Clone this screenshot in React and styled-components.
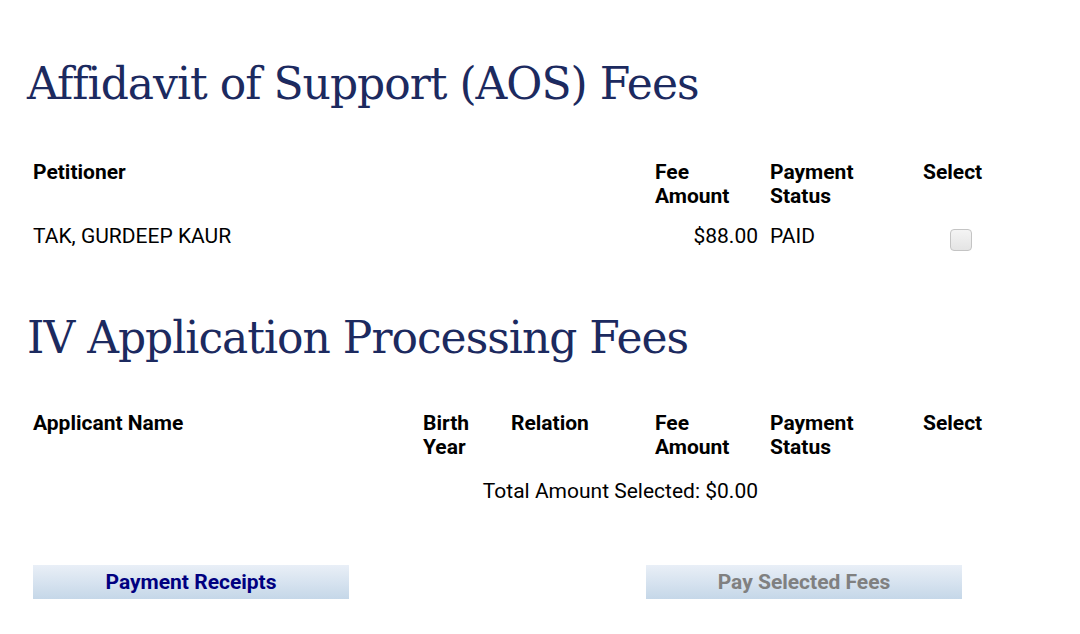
import styled, { createGlobalStyle } from "styled-components";

const Global = createGlobalStyle`
  body {
    margin: 0;
    background: #fff;
    font-family: Roboto, "Liberation Sans", sans-serif;
    color: #000;
  }
`;

const Page = styled.div`
  padding: 52px 0 0 27px;
  width: 980px;
`;

const Heading = styled.h1`
  margin: 0 0 ${(p) => p.$after}px 0;
  font-family: "DejaVu Serif", "Liberation Serif", serif;
  font-weight: normal;
  font-size: 44px;
  letter-spacing: -1px;
  line-height: 64px;
  color: #1c2a5f;
`;

const Grid = styled.div`
  display: grid;
  grid-template-columns: ${(p) => p.$cols};
  font-size: 21px;
  line-height: 24px;
`;

const Head = styled.div`
  padding: 0 6px;
  font-weight: bold;
  text-align: ${(p) => p.$align || "left"};
`;

const Cell = styled.div`
  padding: 16px 6px 0 6px;
  text-align: ${(p) => p.$align || "left"};
`;

const Check = styled.span`
  display: inline-block;
  width: 20px;
  height: 20px;
  margin-top: 5px;
  border: 1px solid #c4c4c4;
  border-radius: 4px;
  background: linear-gradient(#f4f4f4, #e4e4e4);
`;

const Total = styled.div`
  grid-column: 1 / ${(p) => p.$span};
  padding: 20px 6px 0 6px;
  text-align: right;
`;

const Section = styled.section`
  margin-bottom: ${(p) => p.$gap}px;
`;

const Buttons = styled.div`
  display: flex;
  justify-content: space-between;
  width: 929px;
  margin-left: 6px;
`;

const Button = styled.button`
  width: 316px;
  height: 34px;
  border: none;
  background: linear-gradient(#e9eff7, #c5d7e8);
  font-family: Roboto, "Liberation Sans", sans-serif;
  font-size: 21px;
  font-weight: bold;
  color: ${(p) => (p.disabled ? "#808080" : "#000080")};
  padding: 0;
`;

const cols1 = "622px 115px 153px 88px";
const cols2 = "390px 88px 144px 115px 153px 88px";

export default function App() {
  return (
    <Page>
      <Global />
      <Section $gap={50}>
        <Heading $after={44}>Affidavit of Support (AOS) Fees</Heading>
        <Grid $cols={cols1}>
          <Head>Petitioner</Head>
          <Head>Fee<br />Amount</Head>
          <Head>Payment<br />Status</Head>
          <Head>Select</Head>
          <Cell>TAK, GURDEEP KAUR</Cell>
          <Cell $align="right">$88.00</Cell>
          <Cell>PAID</Cell>
          <Cell $align="center"><Check /></Cell>
        </Grid>
      </Section>
      <Section $gap={62}>
        <Heading $after={41}>IV Application Processing Fees</Heading>
        <Grid $cols={cols2}>
          <Head>Applicant Name</Head>
          <Head>Birth<br />Year</Head>
          <Head>Relation</Head>
          <Head>Fee<br />Amount</Head>
          <Head>Payment<br />Status</Head>
          <Head>Select</Head>
          <Total $span={5}>Total Amount Selected: $0.00</Total>
        </Grid>
      </Section>
      <Buttons>
        <Button>Payment Receipts</Button>
        <Button disabled>Pay Selected Fees</Button>
      </Buttons>
    </Page>
  );
}
